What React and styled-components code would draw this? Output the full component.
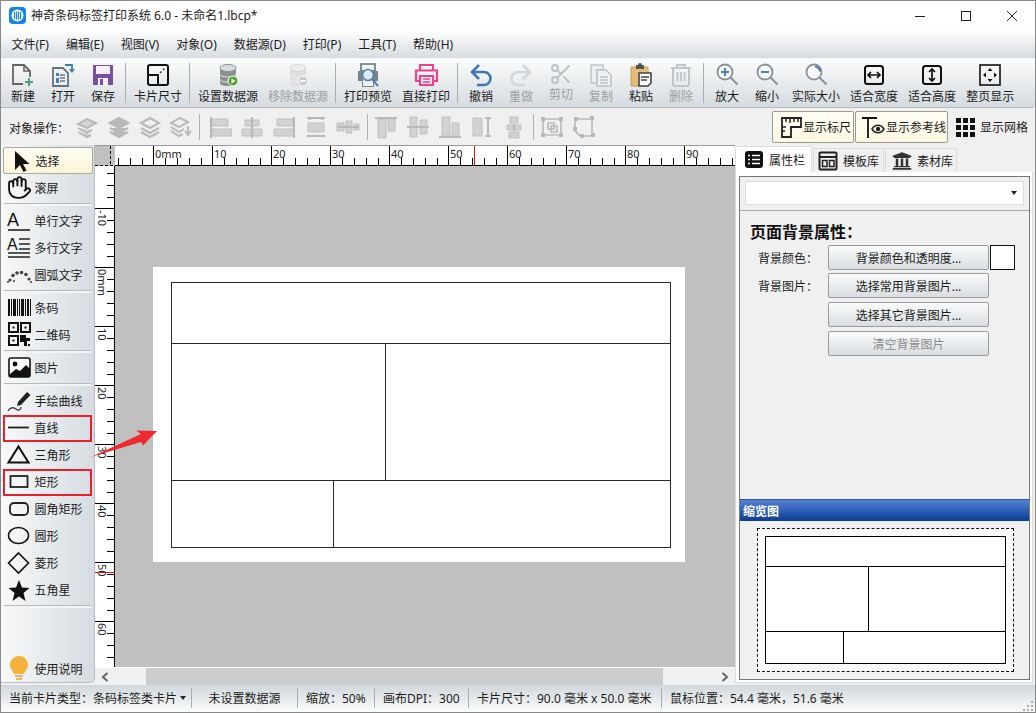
import React from 'react';
import styled, { createGlobalStyle } from 'styled-components';
import { Hand, Scissors } from 'lucide-react';
import { FaUniversity } from 'react-icons/fa';

const GlobalStyle = createGlobalStyle`
  html, body {
    margin: 0;
    padding: 0;
    overflow: hidden;
    background: #fff;
  }
  * { box-sizing: border-box; }
`;

const FONT = '"Noto Sans", "Noto Sans CJK SC", sans-serif';
const PAGE_LINE = '#2a2a2a';

const Window = styled.div`
  position: relative;
  width: 1036px;
  height: 713px;
  border: 1px solid #8a8a8a;
  display: flex;
  flex-direction: column;
  font-family: ${FONT};
  font-size: 12px;
  color: #1c1c1c;
  background: #f0f0f0;
  overflow: hidden;
`;

const TitleBar = styled.div`
  height: 29px;
  flex: none;
  background: #fff;
  display: flex;
  align-items: center;
  padding-left: 8px;
  gap: 5px;
`;

const TitleText = styled.span`
  font-size: 12px;
  color: #222;
  flex: 1;
  margin-top: -2px;
`;

const WinControls = styled.div`
  display: flex;
`;

const WinButton = styled.div`
  width: 46px;
  height: 29px;
  display: flex;
  align-items: center;
  justify-content: center;
`;

const MenuBar = styled.div`
  height: 28px;
  flex: none;
  display: flex;
  align-items: center;
  padding-left: 2px;
  background: linear-gradient(#ffffff, #d7dce1);
`;

const MenuItem = styled.span`
  padding: 0 8.5px;
  white-space: nowrap;
`;

const ToolBar = styled.div`
  height: 50px;
  flex: none;
  display: flex;
  align-items: stretch;
  padding-left: 2px;
  background: linear-gradient(#fbfcfc, #d6dbe0);
  border-top: 1px solid #f4f5f6;
  border-bottom: 1px solid #b4b9be;
  border-bottom-right-radius: 4px;
  margin-bottom: 1px;
`;

const ToolButton = styled.div`
  min-width: 40px;
  padding: 3px 5px 0;
  display: flex;
  flex-direction: column;
  align-items: center;
  white-space: nowrap;
  color: ${p => (p.$off ? '#9aa0a5' : '#1c1c1c')};
  span { line-height: 17px; }
`;

const ToolSep = styled.div`
  width: 1px;
  margin: 4px ${p => p.$r || 3}px 4px 2px;
  background: #a8adb2;
`;

const ObjectBar = styled.div`
  height: 36px;
  flex: none;
  display: flex;
  align-items: center;
  background: #f0f0f0;
  padding-left: 8px;
`;

const ObjectLabel = styled.span`
  width: 63px;
  margin-top: 2px;
  white-space: nowrap;
`;

const ObjectIcon = styled.div`
  width: ${p => p.$w}px;
  display: flex;
  justify-content: center;
`;

const ObjectSep = styled.div`
  width: 1px;
  height: 26px;
  margin: 0 ${p => p.$r || 2}px 0 3px;
  background: #b0b0b0;
`;

const Toggles = styled.div`
  margin-left: auto;
  display: flex;
  align-items: center;
  gap: 1px;
  padding-right: 4px;
`;

const Toggle = styled.div`
  width: ${p => p.$w}px;
  height: 32px;
  display: flex;
  align-items: center;
  gap: ${p => p.$gap}px;
  padding-left: 5px;
  white-space: nowrap;
  border: 1px solid ${p => (p.$on ? '#9c9c94' : 'transparent')};
  border-radius: 2px;
  background: ${p => (p.$on ? 'linear-gradient(#fffdf3, #fdf8e2)' : 'transparent')};
`;

const Main = styled.div`
  flex: 1;
  display: flex;
  min-height: 0;
`;

const LeftPanel = styled.div`
  width: 94px;
  flex: none;
  padding-top: 2px;
  margin-bottom: 2px;
  display: flex;
  flex-direction: column;
  background: linear-gradient(90deg, #f8f9f9, #d6dce1);
  border-right: 1px solid #b9bdc1;
  border-bottom: 1px solid #b9bdc1;
  border-bottom-right-radius: 5px;
`;

const ToolRow = styled.div`
  position: relative;
  height: ${p => p.$h || 27}px;
  flex: none;
  display: flex;
  align-items: center;
  gap: 1.5px;
  padding-left: 4px;
  margin: ${p => (p.$active ? '0 1px 0 2px' : '0')};
  ${p => p.$active && `
    padding-left: 2px;
    background: linear-gradient(#fffdf2, #fbf4d8);
    border: 1px solid #a9a9a0;
    border-radius: 2px;
  `}
  ${p => p.$marked && `
    &::after {
      content: '';
      position: absolute;
      inset: 1px 2px -1px 2px;
      border: 2px solid #e8202c;
    }
  `}
  ${p => p.$bottom && 'margin-top: auto;'}
`;

const RowSep = styled.div`
  height: 6px;
  flex: none;
  display: flex;
  align-items: center;
  padding: 0 3px;
  &::before {
    content: '';
    flex: 1;
    height: 2px;
    background: #f4f5f6;
    border-top: 1px solid #b6babd;
  }
`;

const Workspace = styled.div`
  width: 640px;
  flex: none;
  display: grid;
  grid-template-columns: 20px 620px;
  grid-template-rows: 20px 501px 18px;
  border-top: 1px solid #9a9a9a;
`;

const Corner = styled.div`
  background: #c0c0c0;
`;

const Ruler = styled.div`
  background: #fff;
  svg { display: block; }
`;

const Canvas = styled.div`
  position: relative;
  background: #c0c0c0;
  overflow: hidden;
`;

const Page = styled.div`
  position: absolute;
  left: 38px;
  top: 101px;
  width: 532px;
  height: 295px;
  background: #fff;
  padding: 15px 15px 15px 18px;
`;

const Layout = styled.div`
  width: ${p => p.$w}px;
  height: ${p => p.$h}px;
  border: 1px solid ${p => p.$line};
  background: #fff;
  display: flex;
  flex-direction: column;
`;

const LayoutRow = styled.div`
  height: ${p => p.$h}px;
  flex: none;
  display: flex;
  border-top: ${p => (p.$first ? 'none' : `1px solid ${p.$line}`)};
  &:last-child { flex: 1; height: auto; }
`;

const LayoutCell = styled.div`
  width: ${p => p.$w}px;
  border-right: 1px solid ${p => p.$line};
`;

const ScrollBar = styled.div`
  grid-column: 1 / 3;
  display: flex;
  align-items: center;
  border-top: 1px solid #fff;
  background: #f0f0f0;
`;

const ScrollArrow = styled.div`
  width: 20px;
  display: flex;
  justify-content: center;
`;

const ScrollTrack = styled.div`
  flex: 1;
  height: 100%;
  padding-left: 31px;
`;

const ScrollThumb = styled.div`
  width: 517px;
  height: 100%;
  background: #cdcdcd;
`;

const RightPanel = styled.div`
  flex: 1;
  display: flex;
  flex-direction: column;
  padding-bottom: 2px;
  padding-right: 2px;
`;

const Tabs = styled.div`
  height: 27px;
  flex: none;
  display: flex;
  align-items: flex-end;
`;

const Tab = styled.div`
  width: ${p => p.$w}px;
  height: ${p => (p.$active ? 26 : 24)}px;
  display: flex;
  align-items: center;
  gap: 5px;
  padding-left: ${p => p.$pad}px;
  margin-right: 1px;
  background: ${p => (p.$active ? '#fff' : '#f0f0f0')};
  border: 1px solid #dcdcdc;
  border-bottom: none;
`;

const TabBody = styled.div`
  flex: 1;
  min-height: 0;
  background: #fff;
  border: 1px solid #dcdcdc;
  border-top: none;
  padding: 4px 2px 2px 3px;
  display: flex;
`;

const PropBox = styled.div`
  flex: 1;
  background: #f0f0f0;
  border: 1px solid #777;
  display: flex;
  flex-direction: column;
`;

const SelectWrap = styled.div`
  flex: none;
  height: 34px;
  padding: 4px 5px 5px;
  border-bottom: 1px solid #a8a8a8;
`;

const SelectBox = styled.div`
  height: 24px;
  background: #fff;
  border: 1px solid #dcdcdc;
  display: flex;
  align-items: center;
  justify-content: flex-end;
  padding-right: 6px;
`;

const Caret = styled.i`
  width: 0;
  height: 0;
  border: 3px solid transparent;
  border-top: 4px solid #222;
  border-bottom: none;
`;

const PropBody = styled.div`
  flex: 1;
  padding: 9px 14px 0 10px;
`;

const Heading = styled.div`
  font-size: 16px;
  line-height: 24px;
  font-weight: 700;
  color: #111;
  margin-bottom: 1px;
`;

const PropRow = styled.div`
  height: 25px;
  margin-bottom: 4px;
  display: flex;
  align-items: center;
  &:nth-child(2) { margin-bottom: 3px; }
`;

const PropLabel = styled.span`
  width: 78px;
  padding-left: 8px;
  white-space: nowrap;
`;

const PropButton = styled.div`
  width: 161px;
  height: 25px;
  display: flex;
  align-items: center;
  justify-content: center;
  border: 1px solid #9a9a9a;
  border-radius: 2px;
  color: ${p => (p.$off ? '#8a8a8a' : '#1c1c1c')};
  background: linear-gradient(#fafbfb, #d9dee2);
`;

const Swatch = styled.div`
  width: 25px;
  height: 25px;
  margin-left: 1px;
  background: #fff;
  border: 1px solid #111;
`;

const ThumbHeader = styled.div`
  height: 22px;
  flex: none;
  padding-left: 3px;
  display: flex;
  align-items: center;
  font-weight: 700;
  color: #fff;
  background: linear-gradient(#5482d2, #0b3c96);
  border-top: 1px solid #2a55a8;
`;

const ThumbArea = styled.div`
  height: 158px;
  flex: none;
  display: flex;
  align-items: center;
  justify-content: center;
  padding-left: 1px;
  padding-bottom: 1px;
`;

const ThumbFrame = styled.div`
  width: 257px;
  height: 144px;
  padding: 7px;
  display: flex;
  align-items: center;
  justify-content: center;
  border: 1px dashed #111;
  background: #fbfbfb;
`;

const StatusBar = styled.div`
  height: 27px;
  flex: none;
  display: flex;
  align-items: center;
  position: relative;
  padding-bottom: 1px;
  background: linear-gradient(#d1d7dc, #fbfcfc);
`;

const StatusCell = styled.div`
  width: ${p => p.$w}px;
  height: 20px;
  flex: none;
  display: flex;
  align-items: center;
  gap: 3px;
  white-space: pre;
  justify-content: ${p => (p.$center ? 'center' : 'flex-start')};
  padding-left: ${p => (p.$center ? 0 : 8)}px;
  border-right: 1px solid ${p => (p.$last ? 'transparent' : '#a9aeb2')};
`;

const Grip = styled.svg`
  position: absolute;
  right: 1px;
  bottom: 1px;
`;

const ArrowMark = styled.svg`
  position: absolute;
  left: 87px;
  top: 427px;
`;

const FlipHand = styled(Hand)`
  transform: scaleX(-1);
`;

const IconBox = styled.div`
  width: 28px;
  height: 27px;
  flex: none;
  display: flex;
  align-items: center;
  justify-content: center;
`;

// toolbar icons

const Ic = ({ s = 26, children }) => (
  <svg width={s} height={s} viewBox={`0 0 ${s} ${s}`} fill="none">{children}</svg>
);

const Logo = () => (
  <svg width="17" height="17" viewBox="0 0 17 17">
    <rect width="17" height="17" rx="4" fill="#1683ea" />
    <circle cx="8.5" cy="8.5" r="6" fill="#fff" />
    <path d="M5.5 5v7M7.5 4.5v8M9.5 4.5v8M11.5 5v7" stroke="#1683ea" strokeWidth="1.2" />
  </svg>
);

const NewIcon = () => (
  <Ic>
    <path d="M13 22H3V3h11l6 6v6" stroke="#666" strokeWidth="1.8" />
    <path d="M14 3v6h6" stroke="#666" strokeWidth="1.6" />
    <path d="M19 16v8M15 20h8" stroke="#4f9d84" strokeWidth="2" />
  </Ic>
);

const OpenIcon = () => (
  <Ic>
    <path d="M3 6h10l5 5v13H3z" fill="#eef1f4" stroke="#68737d" strokeWidth="1.8" />
    <path d="M6 11h3v3H6zM6 16h3v5H6z" fill="#3d7fbd" />
    <path d="M10 13h5M10 16h5M10 19h5" stroke="#68737d" strokeWidth="1.4" />
    <path d="M15 3h7v5" stroke="#3d7fbd" strokeWidth="1.8" />
    <path d="M19 7l3 4 3-4z" fill="#3d7fbd" />
  </Ic>
);

const SaveIcon = () => (
  <Ic>
    <path d="M3 3h20v20H3z" fill="#7c4ea0" />
    <path d="M6 4h14v8H6z" fill="#f4eff8" />
    <path d="M8 16h10v7H8z" fill="#f4eff8" />
    <path d="M10 17h3v6h-3z" fill="#7c4ea0" />
  </Ic>
);

const CardIcon = () => (
  <Ic>
    <rect x="3" y="3" width="20" height="20" rx="2" stroke="#111" strokeWidth="2" />
    <path d="M3 13h10v10" stroke="#111" strokeWidth="2" />
    <path d="M15 11l1.5-1.5M18 8l1.5-1.5" stroke="#333" strokeWidth="1.4" />
  </Ic>
);

const DbIcon = ({ off }) => (
  <Ic>
    <path d="M5 6v15c0 2 3 3 8 3s8-1 8-3V6z" fill={off ? '#dcdedf' : '#8b8f90'} />
    <path d="M5 12c0 2 3 3 8 3s8-1 8-3M5 17c0 2 3 3 8 3s8-1 8-3" stroke={off ? '#f2f2f2' : '#e8e8e8'} strokeWidth="1" />
    <ellipse cx="13" cy="6" rx="8" ry="3.5" fill={off ? '#ecedee' : '#d9dcdc'} stroke={off ? '#d5d7d8' : '#8b8f90'} />
    <circle cx="18" cy="19" r="5" fill={off ? '#c9cccf' : '#4fa52e'} stroke="#fff" />
    {off
      ? <path d="M15 19h6" stroke="#fff" strokeWidth="1.6" />
      : <path d="M16.5 16.5v5l4-2.5z" fill="#fff" />}
  </Ic>
);

const PreviewIcon = () => (
  <Ic>
    <path d="M6 2h14v7H6z" fill="#f2f3f4" stroke="#6b7177" strokeWidth="1.6" />
    <path d="M3 9h20v10h-4v6H7v-6H3z" fill="#7b8187" />
    <path d="M8 15h10v9H8z" fill="#eef0f1" />
    <circle cx="13" cy="13" r="5.5" fill="#dde9f3" stroke="#4b80b4" strokeWidth="1.6" />
    <path d="M17 17l6 7" stroke="#4b80b4" strokeWidth="2" />
  </Ic>
);

const PrintIcon = () => (
  <Ic>
    <path d="M7 8V3h13v5" stroke="#e2468e" strokeWidth="2.2" />
    <path d="M7 19H3V8.5h21V19h-4" stroke="#e2468e" strokeWidth="2.2" />
    <path d="M7 14h13v9H7z" stroke="#e2468e" strokeWidth="2.2" />
    <path d="M10 17h7M10 20h7" stroke="#e2468e" strokeWidth="1.4" />
  </Ic>
);

const UndoIcon = ({ color = '#3f79b5', flip }) => (
  <Ic>
    <g transform={flip ? 'translate(26 0) scale(-1 1)' : undefined}>
      <path d="M11 3L4 10l7 7" stroke={color} strokeWidth="2.6" />
      <path d="M4 10h12a6 6 0 0 1 0 13H9" stroke={color} strokeWidth="2.6" />
    </g>
  </Ic>
);

const CopyIcon = () => (
  <Ic>
    <path d="M3 3h12v18H3z" fill="#eceeef" stroke="#c3c7ca" strokeWidth="1.6" />
    <path d="M9 8h9l5 5v11H9z" fill="#f1f2f3" stroke="#bdc1c4" strokeWidth="1.6" />
    <path d="M12 15h8M12 18h8M12 21h8" stroke="#bdc1c4" strokeWidth="1.4" />
  </Ic>
);

const PasteIcon = () => (
  <Ic>
    <path d="M3 5h17v19H3z" fill="#e5bd78" stroke="#c9a262" />
    <path d="M8 5V3h2a2 2 0 0 1 4 0h2v4H8z" fill="#555" />
    <path d="M11 11h12v10l-3 3h-9z" fill="#fff" stroke="#444" strokeWidth="1.6" />
    <path d="M13 15h8M13 18h6" stroke="#444" strokeWidth="1.4" />
  </Ic>
);

const TrashIcon = () => (
  <Ic>
    <path d="M3 6h20M9 6V3h8v3" stroke="#c1c5c8" strokeWidth="1.8" />
    <rect x="5" y="6" width="16" height="18" rx="2" stroke="#c1c5c8" strokeWidth="2" />
    <path d="M9.5 10v9M13 10v9M16.5 10v9" stroke="#c1c5c8" strokeWidth="1.8" />
  </Ic>
);

const ZoomIcon = ({ mark }) => (
  <Ic>
    <circle cx="11" cy="10" r="7.5" fill="#f6f8fa" stroke="#8b9096" strokeWidth="1.8" />
    <path d="M16.5 15.5l7 7" stroke="#8b9096" strokeWidth="2" />
    {mark === 'in' && <path d="M11 6v8M7 10h8" stroke="#4b80b4" strokeWidth="2" />}
    {mark === 'out' && <path d="M7 10h8" stroke="#4b80b4" strokeWidth="2" />}
    {mark === 'fit' && <path d="M12 4.5a6 6 0 0 1 5 5" stroke="#4b80b4" strokeWidth="2" />}
  </Ic>
);

const FitIcon = ({ dir }) => (
  <Ic>
    <rect x="4" y="4" width="18" height="18" rx="2.5" stroke="#111" strokeWidth="2" />
    {dir === 'w'
      ? <path d="M7 13h12M10 10l-3 3 3 3M16 10l3 3-3 3" stroke="#111" strokeWidth="1.7" />
      : <path d="M13 7v12M10 10l3-3 3 3M10 16l3 3 3-3" stroke="#111" strokeWidth="1.7" />}
  </Ic>
);

const PageIcon = () => (
  <Ic>
    <rect x="3" y="3" width="20" height="20" stroke="#111" strokeWidth="1.6" />
    <path d="M13 6l-2.5 3h5zM13 20l-2.5-3h5zM6 13l3-2.5v5zM20 13l-3-2.5v5z" fill="#111" />
  </Ic>
);

const TOOLS = [
  ['新建', <NewIcon />], ['打开', <OpenIcon />], ['保存', <SaveIcon />], 'sep',
  ['卡片尺寸', <CardIcon />], 'sep',
  ['设置数据源', <DbIcon />], ['移除数据源', <DbIcon off />, true], 'sep',
  ['打印预览', <PreviewIcon />], ['直接打印', <PrintIcon />], 'sep',
  ['撤销', <UndoIcon />], ['重做', <UndoIcon flip color="#d3d6d9" />, true],
  ['剪切', <Scissors size={24} color="#bcc0c3" strokeWidth={1.8} />, true],
  ['复制', <CopyIcon />, true], ['粘贴', <PasteIcon />], ['删除', <TrashIcon />, true], 'sep',
  ['放大', <ZoomIcon mark="in" />], ['缩小', <ZoomIcon mark="out" />], ['实际大小', <ZoomIcon mark="fit" />],
  ['适合宽度', <FitIcon dir="w" />], ['适合高度', <FitIcon dir="h" />], ['整页显示', <PageIcon />],
];

// object bar icons, all greyed out

const G = '#b9b9b9';

const LayerIcon = ({ variant }) => (
  <Ic s={24}>
    {variant === 0 && <path d="M2 9l9-5 9 4-9 5zM2 13l9 5 5-3M2 17l9 5 4-2" stroke={G} strokeWidth="2" fill="#d4d4d4" />}
    {variant === 1 && <path d="M12 3l9 5-9 5-9-5z M3 13l9 5 9-5 M3 17l9 5 9-5" stroke={G} strokeWidth="2.4" fill={G} />}
    {variant === 2 && <path d="M12 3l9 5-9 5-9-5z M3 13l9 5 9-5 M3 17l9 5 9-5" stroke={G} strokeWidth="2.2" />}
    {variant === 3 && <path d="M2 8l9-5 8 4-9 5zM2 12l8 5 5-3M2 16l8 5 4-2M19 11v8M16 16l3 4 3-4" stroke={G} strokeWidth="2" />}
  </Ic>
);

const AlignIcon = ({ d, f }) => (
  <Ic s={24}>
    <path d={f} fill="#d2d2d2" stroke="#c0c0c0" />
    <path d={d} stroke={G} strokeWidth="2" />
  </Ic>
);

const ALIGN_A = [
  { d: 'M3 2v21', f: 'M4 4h16v7H4zM4 14h20v7H4z' },
  { d: 'M12 2v21', f: 'M5 5h14v6H5zM2 14h20v7H2z' },
  { d: 'M22 2v21', f: 'M5 4h16v7H5zM2 14h20v7H2z' },
  { d: 'M3 3h18M3 21h18M6 3v2M18 3v2', f: 'M4 8h16v9H4z' },
  { d: 'M2 12h21', f: 'M1 8h7v8H1zM10 6h6v12h-6zM18 9h5v6h-5z' },
];

const ALIGN_B = [
  { d: 'M1 3h22', f: 'M4 4h8v19H4zM14 4h7v12h-7z' },
  { d: 'M1 12h22', f: 'M4 2h7v20H4zM14 5h7v14h-7z' },
  { d: 'M1 22h22', f: 'M4 2h8v19H4zM14 8h7v13h-7z' },
  { d: 'M18 3v18M15 3h6M15 21h6', f: 'M3 3h9v18H3z' },
  { d: 'M12 9v7', f: 'M8 2h8v6H8zM5 10h14v5H5zM7 17h10v6H7z' },
];

const GroupIcon = ({ corners, d }) => (
  <Ic s={24}>
    <path d={corners} fill={G} />
    <path d={d} stroke={G} strokeWidth="1.6" />
  </Ic>
);

// left panel icons

const PanelIc = ({ children }) => (
  <IconBox>
    <svg width="28" height="27" viewBox="0 0 28 27" fill="none">{children}</svg>
  </IconBox>
);

const PICKS = {
  select: <path d="M9 4v19l5-5 3.5 7 3-1.5-3.5-6.5h6.5z" fill="#111" />,
  single: (
    <>
      <text x="2" y="19" fontFamily="Liberation Sans, sans-serif" fontSize="18" fill="#111">A</text>
      <path d="M3 23h22" stroke="#222" strokeWidth="1.6" />
    </>
  ),
  multi: (
    <>
      <text x="2" y="16" fontFamily="Liberation Sans, sans-serif" fontSize="16" fill="#111">A</text>
      <path d="M14 5h11M14 10h11M14 15h11M3 19h22M3 23h22" stroke="#222" strokeWidth="1.6" />
    </>
  ),
  arc: (
    <g fill="#444">
      <circle cx="5" cy="19" r="1.6" /><circle cx="8" cy="14.5" r="1.8" /><circle cx="12" cy="12" r="1.8" />
      <circle cx="16.5" cy="11.5" r="1.8" /><circle cx="21" cy="13.5" r="1.8" /><circle cx="24" cy="18" r="1.6" />
      <circle cx="3" cy="21" r="1.1" /><circle cx="9" cy="20" r="1.1" /><circle cx="26" cy="21" r="1.1" />
    </g>
  ),
  pic: (
    <>
      <rect x="4" y="4" width="21" height="19" rx="2" fill="#fff" stroke="#111" strokeWidth="1.6" />
      <circle cx="10" cy="10" r="2.4" fill="#111" />
      <path d="M4 21l7-6 4 2 6-6 4 4v8H4z" fill="#111" />
    </>
  ),
  pen: (
    <>
      <path d="M13 15l9-10 3.5 3-9.5 10-4 1z" fill="#222" />
      <path d="M3 24c2-4 6-4 8-2s5 1 5-2" stroke="#444" strokeWidth="1.4" />
    </>
  ),
  line: <path d="M3 13.5h21" stroke="#222" strokeWidth="1.8" />,
  tri: <path d="M13.5 5.5l10 16h-20z" stroke="#111" strokeWidth="2" />,
  rect: <rect x="5.5" y="8" width="17" height="11" fill="#f4f5f6" stroke="#222" strokeWidth="1.8" />,
  round: <rect x="5" y="8" width="18" height="12" rx="4" stroke="#222" strokeWidth="1.8" />,
  oval: <ellipse cx="13.5" cy="13.5" rx="10" ry="8" stroke="#111" strokeWidth="1.5" />,
  diamond: <path d="M13.5 4l10 10-10 10-10-10z" stroke="#111" strokeWidth="1.6" />,
  star: <path d="M14 4l3 7.5 7.5.5-6 5 2 8-6.500-4.500-6.500 4.500 2-8-6-5 7.500-.5z" fill="#111" />,
  bulb: (
    <>
      <path d="M14 1C8.500 1 5 5 5 10c0 4 3 6 4 9h10c1-3 4-5 4-9 0-5-3.500-9-9-9z" fill="#f6b23c" />
      <path d="M10 21h8M11 24h6" stroke="#e3b869" strokeWidth="2" />
    </>
  ),
};

const BarcodeIcon = () => (
  <PanelIc>
    {[[3, 2], [6, 1], [8, 3], [12, 1], [14, 1], [16, 3], [20, 1], [22, 2], [25, 1]].map(([x, w]) => (
      <rect key={x} x={x} y="5" width={w} height="17" fill="#111" />
    ))}
  </PanelIc>
);

const QrIcon = () => (
  <PanelIc>
    <g stroke="#111" strokeWidth="2">
      <rect x="4" y="2" width="9" height="9" />
      <rect x="16" y="2" width="9" height="9" />
      <rect x="4" y="15" width="9" height="9" />
    </g>
    <path d="M7.500 5.500h2v2h-2zM19.500 5.500h2v2h-2zM7.500 18.500h2v2h-2z" fill="#111" />
    <path d="M15 14h6v3h4v3h-3v5h-3v-4h-4zM23 23h2v2h-2z" fill="#111" />
  </PanelIc>
);

const RULER_W = 620;
const RULER_H = 501;
const PX_PER_MM = 5.9;
const RULER_FONT = '"Noto Sans", sans-serif';

const hTicks = [];
for (let mm = -6; mm <= 98; mm += 2) hTicks.push(mm);
const vTicks = [];
for (let mm = -16; mm <= 66; mm += 2) vTicks.push(mm);

const HRuler = () => {
  const zero = 38.4;
  return (
    <svg width={RULER_W} height="20" fontFamily={RULER_FONT} fontSize="11" fill="#222">
      <path d={`M0 19.500H${RULER_W}`} stroke="#000" />
      {hTicks.map(mm => {
        const x = Math.round(zero + mm * PX_PER_MM) + 0.5;
        const major = mm % 10 === 0;
        return (
          <React.Fragment key={mm}>
            <path d={`M${x} ${major ? 0 : 12}V19`} stroke="#000" />
            {major && mm >= 0 && <text x={x + 1.5} y="11.500">{mm === 0 ? '0mm' : mm}</text>}
          </React.Fragment>
        );
      })}
      <path d={`M${Math.round(zero + 54.4 * PX_PER_MM) + 0.5} 0V19`} stroke="#e01010" />
    </svg>
  );
};

const VRuler = () => {
  const zero = 101.4;
  return (
    <svg width="20" height={RULER_H} fontFamily={RULER_FONT} fontSize="11" fill="#222">
      <path d={`M19.500 0V${RULER_H}`} stroke="#000" />
      {vTicks.map(mm => {
        const y = Math.round(zero + mm * PX_PER_MM) + 0.5;
        const major = mm % 10 === 0;
        return (
          <React.Fragment key={mm}>
            <path d={`M${major ? 0 : 12} ${y}H19`} stroke="#000" />
            {major && (
              <text x="3" y={y + 1.5} transform={`rotate(90 3 ${y + 1.5})`}>{mm === 0 ? '0mm' : mm}</text>
            )}
          </React.Fragment>
        );
      })}
      <path d={`M0 ${Math.round(zero + 51.6 * PX_PER_MM) + 0.5}H20`} stroke="#e01010" />
    </svg>
  );
};

const CardLayout = ({ w, h, line, rows }) => (
  <Layout $w={w} $h={h} $line={line}>
    {rows.map((row, i) => (
      <LayoutRow key={i} $h={row.h} $first={i === 0} $line={line}>
        {row.split && <LayoutCell $w={row.split} $line={line} />}
      </LayoutRow>
    ))}
  </Layout>
);

const App = () => (
  <Window>
    <GlobalStyle />
    <TitleBar>
      <Logo />
      <TitleText>神奇条码标签打印系统 6.0 - 未命名1.lbcp*</TitleText>
      <WinControls>
        <WinButton>
          <svg width="12" height="12"><path d="M1 6.500h10" stroke="#222" /></svg>
        </WinButton>
        <WinButton>
          <svg width="12" height="12"><rect x="1.500" y="1.500" width="9" height="9" stroke="#222" fill="none" /></svg>
        </WinButton>
        <WinButton>
          <svg width="12" height="12"><path d="M1 1l10 10M11 1L1 11" stroke="#222" /></svg>
        </WinButton>
      </WinControls>
    </TitleBar>

    <MenuBar>
      {['文件(F)', '编辑(E)', '视图(V)', '对象(O)', '数据源(D)', '打印(P)', '工具(T)', '帮助(H)'].map(m => (
        <MenuItem key={m}>{m}</MenuItem>
      ))}
    </MenuBar>

    <ToolBar>
      {TOOLS.map((t, i) => (t === 'sep'
        ? <ToolSep key={i} />
        : (
          <ToolButton key={t[0]} $off={t[2]}>
            {t[1]}
            <span>{t[0]}</span>
          </ToolButton>
        )))}
    </ToolBar>

    <ObjectBar>
      <ObjectLabel>对象操作：</ObjectLabel>
      {[0, 1, 2, 3].map(v => <ObjectIcon key={v} $w={31}><LayerIcon variant={v} /></ObjectIcon>)}
      <ObjectSep $r={4} />
      {ALIGN_A.map((a, i) => <ObjectIcon key={i} $w={32}><AlignIcon d={a.d} f={a.f} /></ObjectIcon>)}
      <ObjectSep />
      {ALIGN_B.map((a, i) => <ObjectIcon key={i} $w={32}><AlignIcon d={a.d} f={a.f} /></ObjectIcon>)}
      <ObjectSep />
      <ObjectIcon $w={32}>
        <GroupIcon
          corners="M1 2h4v4H1zM19 2h4v4h-4zM1 18h4v4H1zM19 18h4v4h-4z"
          d="M5 4h14M5 20h14M3 6v12M21 6v12M8 8h6v6H8zM11 11h6v6h-6z"
        />
      </ObjectIcon>
      <ObjectIcon $w={32}>
        <GroupIcon
          corners="M2 2h4v4H2zM18 1h4v4h-4zM1 12h4v4H1zM19 18h4v4h-4zM8 19h4v4H8z"
          d="M6 4h12M3 6v6M20 5v13M3 16l5 5M12 21h7"
        />
      </ObjectIcon>
      <Toggles>
        <Toggle $on $w={82} $gap={1}>
          <Ic s={24}>
            <path d="M4 3h19v9H13v10H4z" stroke="#222" strokeWidth="1.8" />
            <path d="M8 3v4M12 3v5M16 3v4M20 3v4M4 12h4M4 16h3" stroke="#222" strokeWidth="1.5" />
          </Ic>
          显示标尺
        </Toggle>
        <Toggle $on $w={93} $gap={1}>
          <Ic s={24}>
            <path d="M1 3h15M7 3v20" stroke="#111" strokeWidth="1.8" />
            <path d="M11 14c3-5 9-5 12 0-3 5-9 5-12 0z" stroke="#222" strokeWidth="1.5" />
            <circle cx="17" cy="14" r="2.200" fill="#222" />
          </Ic>
          显示参考线
        </Toggle>
        <Toggle $w={82} $gap={5}>
          <Ic s={20}>
            {[1, 8, 15].flatMap(x => [1, 8, 15].map(y => (
              <rect key={`${x}-${y}`} x={x} y={y} width="5" height="5" fill="#111" />
            )))}
          </Ic>
          显示网格
        </Toggle>
      </Toggles>
    </ObjectBar>

    <Main>
      <LeftPanel>
        <ToolRow $active><PanelIc>{PICKS.select}</PanelIc>选择</ToolRow>
        <ToolRow><IconBox><FlipHand size={25} strokeWidth={1.8} color="#111" /></IconBox>滚屏</ToolRow>
        <RowSep />
        <ToolRow><PanelIc>{PICKS.single}</PanelIc>单行文字</ToolRow>
        <ToolRow><PanelIc>{PICKS.multi}</PanelIc>多行文字</ToolRow>
        <ToolRow><PanelIc>{PICKS.arc}</PanelIc>圆弧文字</ToolRow>
        <RowSep />
        <ToolRow><BarcodeIcon />条码</ToolRow>
        <ToolRow><QrIcon />二维码</ToolRow>
        <RowSep />
        <ToolRow><PanelIc>{PICKS.pic}</PanelIc>图片</ToolRow>
        <RowSep />
        <ToolRow><PanelIc>{PICKS.pen}</PanelIc>手绘曲线</ToolRow>
        <ToolRow $marked><PanelIc>{PICKS.line}</PanelIc>直线</ToolRow>
        <ToolRow><PanelIc>{PICKS.tri}</PanelIc>三角形</ToolRow>
        <ToolRow $marked><PanelIc>{PICKS.rect}</PanelIc>矩形</ToolRow>
        <ToolRow><PanelIc>{PICKS.round}</PanelIc>圆角矩形</ToolRow>
        <ToolRow><PanelIc>{PICKS.oval}</PanelIc>圆形</ToolRow>
        <ToolRow><PanelIc>{PICKS.diamond}</PanelIc>菱形</ToolRow>
        <ToolRow><PanelIc>{PICKS.star}</PanelIc>五角星</ToolRow>
        <RowSep />
        <ToolRow $bottom><PanelIc>{PICKS.bulb}</PanelIc>使用说明</ToolRow>
      </LeftPanel>

      <Workspace>
        <Corner>
          <svg width="20" height="20">
            <path d="M0 19.500H20M15.500 0V20" stroke="#000" strokeDasharray="3 2" />
          </svg>
        </Corner>
        <Ruler><HRuler /></Ruler>
        <Ruler><VRuler /></Ruler>
        <Canvas>
          <Page>
            <CardLayout
              w={500}
              h={266}
              line={PAGE_LINE}
              rows={[{ h: 60 }, { h: 137, split: 214 }, { h: 67, split: 162 }]}
            />
          </Page>
        </Canvas>
        <ScrollBar>
          <ScrollArrow>
            <svg width="10" height="12"><path d="M7.500 2L3 6l4.500 4" stroke="#666" strokeWidth="2" fill="none" /></svg>
          </ScrollArrow>
          <ScrollTrack><ScrollThumb /></ScrollTrack>
          <ScrollArrow>
            <svg width="10" height="12"><path d="M2.500 2L7 6l-4.500 4" stroke="#666" strokeWidth="2" fill="none" /></svg>
          </ScrollArrow>
        </ScrollBar>
      </Workspace>

      <RightPanel>
        <Tabs>
          <Tab $active $w={77} $pad={8}>
            <Ic s={20}>
              <rect x="1" y="1" width="18" height="17" rx="3" fill="#111" />
              <path d="M4 5.500h2M8 5.500h8M4 9.500h2M8 9.500h8M4 13.500h2M8 13.500h8" stroke="#fff" strokeWidth="1.6" />
            </Ic>
            属性栏
          </Tab>
          <Tab $w={71} $pad={4}>
            <Ic s={20}>
              <rect x="1.500" y="1.500" width="17" height="17" rx="1" stroke="#222" strokeWidth="2" />
              <path d="M1.500 6h17" stroke="#222" strokeWidth="2" />
              <path d="M4.500 9.500h4.500v6H4.500zM11.500 9.500h4.500v6h-4.500z" stroke="#222" strokeWidth="1.5" />
            </Ic>
            模板库
          </Tab>
          <Tab $w={72} $pad={6}>
            <FaUniversity size={20} color="#333" />
            素材库
          </Tab>
        </Tabs>
        <TabBody>
          <PropBox>
            <SelectWrap>
              <SelectBox><Caret /></SelectBox>
            </SelectWrap>
            <PropBody>
              <Heading>页面背景属性：</Heading>
              <PropRow>
                <PropLabel>背景颜色：</PropLabel>
                <PropButton>背景颜色和透明度...</PropButton>
                <Swatch />
              </PropRow>
              <PropRow>
                <PropLabel>背景图片：</PropLabel>
                <PropButton>选择常用背景图片...</PropButton>
              </PropRow>
              <PropRow>
                <PropLabel />
                <PropButton>选择其它背景图片...</PropButton>
              </PropRow>
              <PropRow>
                <PropLabel />
                <PropButton $off>清空背景图片</PropButton>
              </PropRow>
            </PropBody>
            <ThumbHeader>缩览图</ThumbHeader>
            <ThumbArea>
              <ThumbFrame>
                <CardLayout
                  w={241}
                  h={128}
                  line="#000"
                  rows={[{ h: 29 }, { h: 65, split: 103 }, { h: 33, split: 78 }]}
                />
              </ThumbFrame>
            </ThumbArea>
          </PropBox>
        </TabBody>
      </RightPanel>
    </Main>

    <StatusBar>
      <StatusCell $w={191}>当前卡片类型：条码标签类卡片<Caret /></StatusCell>
      <StatusCell $w={106} $center>未设置数据源</StatusCell>
      <StatusCell $w={77}>缩放：50%</StatusCell>
      <StatusCell $w={94}>画布DPI：300</StatusCell>
      <StatusCell $w={193}>卡片尺寸：90.0 毫米 x 50.0 毫米</StatusCell>
      <StatusCell $w={200} $last>鼠标位置：54.4 毫米，51.6 毫米</StatusCell>
      <Grip width="11" height="11">
        <path d="M8 1h2v2H8zM4 5h2v2H4zM8 5h2v2H8zM0 9h2v2H0zM4 9h2v2H4zM8 9h2v2H8z" fill="#a8adb2" />
      </Grip>
    </StatusBar>

    <ArrowMark width="72" height="34" viewBox="0 0 72 34">
      <path d="M3 29L53 6 48 2.500 69 3 55 17.500 53 14z" fill="#ee2a2e" />
    </ArrowMark>
  </Window>
);

export default App;
